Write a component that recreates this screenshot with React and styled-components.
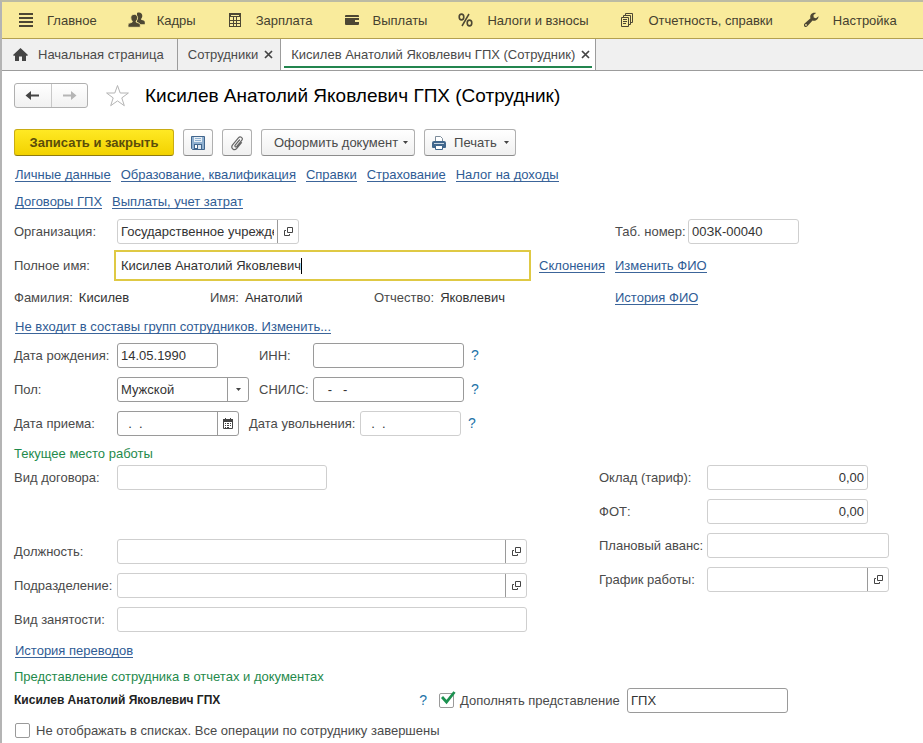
import React, { useState } from 'react';
import styled, { createGlobalStyle, css } from 'styled-components';

const GlobalStyle = createGlobalStyle`
  * {
    box-sizing: border-box;
  }
  body {
    margin: 0;
    background: #fff;
  }
  body, button, input, select {
    font-family: "Liberation Sans", Arial, sans-serif;
    font-size: 13px;
    line-height: 15px;
    color: #4a4a4a;
  }
  button {
    margin: 0;
    padding: 0;
    border: none;
    background: none;
    cursor: pointer;
  }
`;

const Window = styled.div`
  min-height: 100vh;
  border-top: 2px solid #bcbba4;
  border-left: 2px solid #b4b4b4;
`;

const Menu = styled.nav`
  display: flex;
  gap: 31px;
  height: 37px;
  padding-left: 16px;
  background: #f9eb9c;
  border-bottom: 1px solid #b3a050;
`;

const MenuItem = styled.button`
  display: flex;
  align-items: center;
  gap: 12px;
  white-space: nowrap;
  color: #45412f;
  svg {
    flex: none;
  }
`;

const Tabs = styled.div`
  display: flex;
  height: 32px;
  background: #f0f0f0;
  border-bottom: 1px solid #9c9c9c;
`;

const Tab = styled.div`
  display: flex;
  align-items: center;
  gap: 6px;
  padding: 0 7px 0 10px;
  white-space: nowrap;
  border-right: 1px solid #9c9c9c;
  ${({ $home }) => $home && css`
    padding: 0 13px 0 11px;
  `}
  ${({ $active }) => $active && css`
    padding-right: 5px;
    background: linear-gradient(#23854f, #23854f) center bottom 2px / calc(100% - 6px) 2px no-repeat #fff;
  `}
`;

const TabTitle = styled.button`
  display: flex;
  align-items: center;
  gap: 10px;
`;

const TabClose = styled.button`
  display: flex;
`;

const Page = styled.main`
  display: flex;
  flex-direction: column;
  padding: 12px 34px 4px 12px;
`;

const TitleRow = styled.div`
  display: flex;
  align-items: center;
  height: 25px;
`;

const History = styled.div`
  display: flex;
  width: 74px;
  height: 25px;
  border: 1px solid #b0b0b0;
  border-radius: 3px;
  background: linear-gradient(#fff, #f1f1f1);
`;

const HistoryButton = styled.button`
  display: flex;
  flex: 1;
  align-items: center;
  justify-content: center;
  & + & {
    border-left: 1px solid #c8c8c8;
  }
`;

const Favourite = styled.button`
  display: flex;
  margin: 0 15px 0 17px;
`;

const Title = styled.h1`
  margin: 0;
  font-size: 19px;
  line-height: 26px;
  font-weight: normal;
  color: #000;
`;

const Actions = styled.div`
  display: flex;
  gap: 9px;
  margin-top: 21px;
`;

const ActionButton = styled.button`
  display: flex;
  align-items: center;
  justify-content: center;
  gap: 7px;
  min-width: 30px;
  height: 27px;
  padding: 0 6px;
  border: 1px solid #b0b0b0;
  border-bottom-color: #8c8c8c;
  border-radius: 3px;
  background: linear-gradient(#fff, #f0f0f0);
  white-space: nowrap;
`;

const WideButton = styled(ActionButton)`
  gap: 5px;
  padding-left: 12px;
`;

const PrimaryButton = styled(ActionButton)`
  min-width: 160px;
  border-color: #c9ac13;
  border-bottom-color: #8f7b10;
  background: linear-gradient(#ffe924, #f2d200);
  color: #5b4d0a;
  font-weight: bold;
`;

const LinkBar = styled.div`
  display: flex;
  flex-wrap: wrap;
  gap: 10px;
  padding-left: 1px;
  margin-top: ${({ $top }) => $top}px;
`;

const Link = styled.a`
  display: inline-block;
  height: 15px;
  line-height: 16px;
  border-bottom: 1px solid #3c659a;
  color: #2f5c95;
  text-decoration: none;
  white-space: nowrap;
`;

const PersonGrid = styled.div`
  display: grid;
  grid-template-columns: minmax(0, 1fr) 84px 274px;
  align-items: center;
  margin-top: 10px;
`;

const NameGrid = styled(PersonGrid)`
  row-gap: 9px;
  margin: 6px 0 14px;
`;

const Row = styled.div`
  display: flex;
  align-items: center;
  min-height: 25px;
`;

const Label = styled.label`
  flex: none;
  width: ${({ $width }) => ($width ? `${$width}px` : 'auto')};
  white-space: nowrap;
`;

const Field = styled.span`
  display: flex;
  flex: ${({ $width }) => ($width ? 'none' : '1')};
  width: ${({ $width }) => ($width ? `${$width}px` : 'auto')};
  height: 25px;
  min-width: 0;
  border: 1px solid ${({ $soft }) => ($soft ? '#cfcfcf' : '#9a9a9a')};
  border-radius: 3px;
  background: #fff;
  overflow: hidden;
`;

const inputStyles = css`
  min-width: 0;
  padding: 0 3px;
  border: none;
  outline: none;
  background: none;
  color: #333;
`;

const Input = styled.input`
  ${inputStyles}
  flex: 1;
  width: 100%;
  text-align: ${({ $right }) => ($right ? 'right' : 'left')};
`;

const Select = styled.select`
  ${inputStyles}
  flex: 1;
  appearance: none;
`;

const FieldButton = styled.button`
  display: flex;
  flex: none;
  align-items: center;
  justify-content: center;
  width: 21px;
  border-left: 1px solid #9a9a9a;
`;

const FocusField = styled.span`
  display: flex;
  flex: 1;
  align-items: center;
  min-width: 0;
  height: 31px;
  padding-left: 2px;
  border: 2px solid #dfc944;
  background: #fff;
`;

// grows with its text, so that the caret bar stays at the end of it
const GrowingInput = styled.input`
  ${inputStyles}
  padding-right: 0;
  field-sizing: content;
  caret-color: transparent;
`;

const Caret = styled.span`
  width: 1px;
  height: 16px;
  background: #000;
`;

const NameParts = styled.div`
  display: grid;
  grid-template-columns: 196fr 164fr 157fr;
`;

const NamePart = styled.span`
  display: flex;
  gap: 6px;
  b {
    font-weight: normal;
    color: #333;
  }
`;

const Cell = styled.div`
  display: flex;
  padding-left: ${({ $left }) => $left || 0}px;
`;

const Rows = styled.div`
  display: flex;
  flex-direction: column;
  gap: 9px;
`;

const PersonalRows = styled(Rows)`
  margin-top: 9px;
`;

const Slot = styled.div`
  display: flex;
  flex: none;
  width: ${({ $width }) => $width}px;
`;

const Help = styled.button`
  margin-left: 7px;
  color: #2273a8;
  font-size: 14px;
`;

const SectionTitle = styled.h2`
  margin: ${({ $top }) => $top}px 0 4px;
  font-size: 13px;
  line-height: 15px;
  font-weight: normal;
  color: #1f8a4c;
`;

const Work = styled.div`
  display: grid;
  grid-template-columns: minmax(0, 1fr) 290px;
  column-gap: 72px;
`;

const Spacer = styled.div`
  height: 31px;
`;

const Presentation = styled(Row)`
  padding-right: 101px;
`;

const FullTitle = styled.strong`
  flex: 1;
  font-size: 12px;
  color: #222;
  white-space: nowrap;
`;

const ExtendGroup = styled.div`
  display: flex;
  align-items: center;
  gap: 6px;
  margin: 0 6px 0 12px;
`;

const CheckBox = styled.span`
  display: flex;
  position: relative;
  svg {
    position: absolute;
    left: 2px;
    top: -2px;
    pointer-events: none;
  }
`;

const CheckInput = styled.input`
  appearance: none;
  width: 15px;
  height: 15px;
  margin: 0;
  border: 1px solid #9a9a9a;
  border-radius: 2px;
  background: #fff;
`;

const CheckRow = styled.div`
  display: flex;
  align-items: center;
  gap: 6px;
  margin: 10px 0 0 1px;
`;

const ListIcon = () => (
  <svg width="17" height="16" viewBox="0 0 17 16" fill="#4d4733">
    <path d="M1 1h14v2H1zM1 5h14v2H1zM1 9h14v2H1zM1 13h14v2H1z" />
  </svg>
);

const PeopleIcon = () => (
  <svg width="17" height="16" viewBox="0 0 17 16" fill="#4d4733">
    <path d="M11 .5c2 0 3.3 1.3 3.3 3.2 0 1.3-.5 2.4-1.2 3v1l2.4.9c.9.4 1.3 1 1.3 1.9v1.7H9V.9c.6-.3 1.2-.4 2-.4z" />
    <path
      d="M6.200 2.300c2 0 3.400 1.500 3.400 3.500 0 1.400-.6 2.700-1.400 3.400v.9l2.500 1c1.100.4 1.600 1.100 1.600 2.200v2H0v-2c0-1.100.6-1.800 1.600-2.200l2.600-1v-.9C3.400 8.500 2.800 7.200 2.800 5.800c0-2 1.400-3.500 3.400-3.500z"
      stroke="#f9eb9c"
      strokeWidth=".9"
    />
  </svg>
);

const CalcIcon = () => (
  <svg width="17" height="16" viewBox="0 0 17 16">
    <rect x="2.5" y="1.5" width="11" height="13" fill="none" stroke="#4d4733" />
    <path d="M3 2h10v3H3z" fill="#4d4733" />
    <path d="M4 3h8v1H4z" fill="#f9eb9c" />
    <path d="M3 8.500h10M3 11.500h10M6.500 5v9M9.500 5v9" stroke="#4d4733" />
  </svg>
);

const WalletIcon = () => (
  <svg width="17" height="16" viewBox="0 0 17 16" fill="#4d4733">
    <path d="M2 3h12a1 1 0 0 1 1 1v1H1V4a1 1 0 0 1 1-1zM1 6h14v2h-4v2h4v2a1 1 0 0 1-1 1H2a1 1 0 0 1-1-1z" />
  </svg>
);

const PercentIcon = () => (
  <svg width="17" height="16" viewBox="0 0 17 16" fill="none" stroke="#4d4733">
    <ellipse cx="3.5" cy="5" rx="2.3" ry="2.9" strokeWidth="1.6" />
    <ellipse cx="11.5" cy="11" rx="2.3" ry="2.9" strokeWidth="1.6" />
    <path d="M11 2L4 14" strokeWidth="1.5" />
  </svg>
);

const ReportsIcon = () => (
  <svg width="17" height="16" viewBox="0 0 17 16" fill="none" stroke="#4d4733">
    <path d="M1.500 5.500h7v9h-7zM3.500 5V3.500h7v9H9M5.500 3V1.500h7v9H11" />
    <path d="M3 7.500h4M3 9.500h4M3 11.500h3" />
  </svg>
);

const WrenchIcon = () => (
  <svg width="17" height="16" viewBox="0 0 17 16">
    <path
      d="M14.600 4.200l-2.700 2-2.200-.8-.2-2.300L12.100.9C10.200.3 8 .8 6.900 2.400c-.8 1.200-.9 2.600-.4 3.800L.6 11.500c-.9.8-.9 2.100-.2 2.900.8.8 2.100.8 2.900-.1l5.300-5.900c1.500.5 3.300.2 4.500-1 1-.9 1.400-2.100 1.500-3.200z"
      fill="#4d4733"
    />
    <circle cx="2" cy="12.9" r=".9" fill="#f9eb9c" />
  </svg>
);

const HomeIcon = () => (
  <svg width="15" height="13" viewBox="0 0 15 13" fill="#444">
    <path d="M7.500 0L15 7l-1 1-1-.5V13H9V8.500H6V13H2V7.500L1 8 0 7z" />
  </svg>
);

const CloseIcon = () => (
  <svg width="9" height="9" viewBox="0 0 9 9">
    <path d="M1 1l7 7M8 1L1 8" stroke="#444" strokeWidth="1.7" />
  </svg>
);

const ArrowIcon = ({ forward }) => (
  <svg width="15" height="11" viewBox="0 0 15 11">
    <path
      d={forward ? 'M1 4.500h8V1l5.500 4.500L9 10V6.500H1z' : 'M14 4.500H6V1L.5 5.500 6 10V6.500h8z'}
      fill={forward ? '#b5b5b5' : '#444'}
    />
  </svg>
);

const StarIcon = () => (
  <svg width="25" height="23" viewBox="0 0 25 23">
    <path
      d="M12.500 1.500l2.700 7.500h8.200l-6.600 4.900 2.500 7.800-6.800-4.800-6.800 4.800 2.500-7.800L1.600 9h8.200z"
      fill="#fff"
      stroke="#b4b4b4"
    />
  </svg>
);

const SaveIcon = () => (
  <svg width="16" height="16" viewBox="0 0 16 16">
    <path d="M1.500 1.500h13v13h-12l-1-1z" fill="#8fb0d0" stroke="#41658c" />
    <path d="M4 2h8v5H4z" fill="#e6eef5" />
    <path d="M5 3.500h6M5 5.500h6" stroke="#8fb0d0" />
    <path d="M4 9h8v5H4z" fill="#41658c" />
    <path d="M5 10h2v3H5z" fill="#fff" />
    <path d="M8 10h3v4H8z" fill="#dfe8f0" />
  </svg>
);

const ClipIcon = () => (
  <svg width="14" height="16" viewBox="0 0 14 16" fill="none" stroke="#666" strokeWidth="1.2" strokeLinecap="round">
    <path d="M9.500 5L5.200 10.200c-.9 1.200.6 2.400 1.600 1.300l4.900-6c1.900-2.500-1.300-5-3.300-2.700L2.600 9.900c-2.400 3.200 1.600 6.400 4.200 3.400l4.700-5.600" />
  </svg>
);

const PrinterIcon = () => (
  <svg width="16" height="16" viewBox="0 0 16 16">
    <path d="M4.500 7V1.500h5l2 2V7" fill="#fff" stroke="#7d8c9a" />
    <path d="M1 8a2 2 0 0 1 2-2h10a2 2 0 0 1 2 2v4a1 1 0 0 1-1 1H2a1 1 0 0 1-1-1z" fill="#40668c" />
    <path d="M3 8h10v1H3z" fill="#c9d7e4" />
    <path d="M4.500 10.500h7v4h-7z" fill="#fff" stroke="#40668c" />
  </svg>
);

const DropIcon = () => (
  <svg width="5" height="3" viewBox="0 0 5 3">
    <path d="M0 0h5L2.500 3z" fill="#444" />
  </svg>
);

const OpenIcon = () => (
  <svg width="9" height="9" viewBox="0 0 9 9" fill="none" stroke="#444">
    <path d="M3.500.5h5v5h-5zM2 3.500H.5v5h5V7" />
  </svg>
);

const CalendarIcon = () => (
  <svg width="10" height="11" viewBox="0 0 10 11">
    <path d="M.5 2.500h9v8h-9z" fill="none" stroke="#444" />
    <path d="M0 1h2V0h1v1h4V0h1v1h2v3H0z" fill="#444" />
    <path d="M2 5h1v1H2zM4 5h2v1H4zM7 5h1v1H7zM2 7h1v1H2zM4 7h2v1H4zM7 7h1v1H7zM2 9h1v1H2zM4 9h2v1H4z" fill="#444" />
  </svg>
);

const TickIcon = () => (
  <svg width="15" height="14" viewBox="0 0 15 14">
    <path d="M1 6l4.500 5L13.500 1" fill="none" stroke="#1c9150" strokeWidth="2.8" />
  </svg>
);

const menu = [
  { title: 'Главное', Icon: ListIcon },
  { title: 'Кадры', Icon: PeopleIcon },
  { title: 'Зарплата', Icon: CalcIcon },
  { title: 'Выплаты', Icon: WalletIcon },
  { title: 'Налоги и взносы', Icon: PercentIcon },
  { title: 'Отчетность, справки', Icon: ReportsIcon },
  { title: 'Настройка', Icon: WrenchIcon },
];

const links = [
  ['Личные данные', 'Образование, квалификация', 'Справки', 'Страхование', 'Налог на доходы'],
  ['Договоры ГПХ', 'Выплаты, учет затрат'],
];

const TextField = ({ id, label, labelWidth, width, soft, right, value = '', open, calendar }) => (
  <>
    <Label htmlFor={id} $width={labelWidth}>{label}</Label>
    <Field $width={width} $soft={soft}>
      <Input id={id} defaultValue={value} $right={right} />
      {open && (
        <FieldButton type="button" aria-label="Открыть"><OpenIcon /></FieldButton>
      )}
      {calendar && (
        <FieldButton type="button" aria-label="Календарь"><CalendarIcon /></FieldButton>
      )}
    </Field>
  </>
);

const App = () => {
  const [fullName, setFullName] = useState('Кисилев Анатолий Яковлевич');
  const [extend, setExtend] = useState(true);

  return (
    <Window>
      <GlobalStyle />
      <Menu>
        {menu.map(({ title, Icon }) => (
          <MenuItem key={title} type="button">
            <Icon />
            {title}
          </MenuItem>
        ))}
      </Menu>
      <Tabs>
        <Tab $home>
          <TabTitle type="button"><HomeIcon />Начальная страница</TabTitle>
        </Tab>
        <Tab>
          <TabTitle type="button">Сотрудники</TabTitle>
          <TabClose type="button" aria-label="Закрыть"><CloseIcon /></TabClose>
        </Tab>
        <Tab $active>
          <TabTitle type="button">Кисилев Анатолий Яковлевич ГПХ (Сотрудник)</TabTitle>
          <TabClose type="button" aria-label="Закрыть"><CloseIcon /></TabClose>
        </Tab>
      </Tabs>

      <Page>
        <TitleRow>
          <History>
            <HistoryButton type="button" aria-label="Назад"><ArrowIcon /></HistoryButton>
            <HistoryButton type="button" aria-label="Вперед"><ArrowIcon forward /></HistoryButton>
          </History>
          <Favourite type="button" aria-label="В избранное"><StarIcon /></Favourite>
          <Title>Кисилев Анатолий Яковлевич ГПХ (Сотрудник)</Title>
        </TitleRow>

        <Actions>
          <PrimaryButton type="button">Записать и закрыть</PrimaryButton>
          <ActionButton type="button" aria-label="Записать"><SaveIcon /></ActionButton>
          <ActionButton type="button" aria-label="Файлы"><ClipIcon /></ActionButton>
          <WideButton type="button">Оформить документ<DropIcon /></WideButton>
          <ActionButton type="button"><PrinterIcon />Печать<DropIcon /></ActionButton>
        </Actions>

        {links.map((group, i) => (
          <LinkBar key={group[0]} $top={i === 0 ? 11 : 12}>
            {group.map(text => <Link key={text} href="#">{text}</Link>)}
          </LinkBar>
        ))}

        <PersonGrid>
          <Row>
            <TextField id="org" label="Организация:" labelWidth={103} width={182} soft open value="Государственное учреждение" />
          </Row>
          <span />
          <Row>
            <TextField id="number" label="Таб. номер:" labelWidth={73} width={111} soft value="00ЗК-00040" />
          </Row>
        </PersonGrid>
        <NameGrid>
          <Row>
            <Label htmlFor="fullName" $width={100}>Полное имя:</Label>
            <FocusField>
              <GrowingInput id="fullName" value={fullName} onChange={e => setFullName(e.target.value)} />
              <Caret />
            </FocusField>
          </Row>
          <Cell $left={8}><Link href="#">Склонения</Link></Cell>
          <Cell><Link href="#">Изменить ФИО</Link></Cell>
          <NameParts>
            <NamePart>Фамилия: <b>Кисилев</b></NamePart>
            <NamePart>Имя: <b>Анатолий</b></NamePart>
            <NamePart>Отчество: <b>Яковлевич</b></NamePart>
          </NameParts>
          <span />
          <Cell><Link href="#">История ФИО</Link></Cell>
        </NameGrid>

        <LinkBar $top={0}>
          <Link href="#">Не входит в составы групп сотрудников. Изменить...</Link>
        </LinkBar>

        <PersonalRows>
          <Row>
            <Label htmlFor="birth" $width={103}>Дата рождения:</Label>
            <Slot $width={142}>
              <Field $width={101}><Input id="birth" defaultValue="14.05.1990" /></Field>
            </Slot>
            <TextField id="inn" label="ИНН:" labelWidth={54} width={151} />
            <Help type="button">?</Help>
          </Row>
          <Row>
            <Label htmlFor="sex" $width={103}>Пол:</Label>
            <Slot $width={142}>
              <Field $width={132}>
                <Select id="sex" defaultValue="m">
                  <option value="m">Мужской</option>
                  <option value="f">Женский</option>
                </Select>
                <FieldButton as="span"><DropIcon /></FieldButton>
              </Field>
            </Slot>
            <TextField id="snils" label="СНИЛС:" labelWidth={54} width={151} value="   -   -" />
            <Help type="button">?</Help>
          </Row>
          <Row>
            <TextField id="hired" label="Дата приема:" labelWidth={103} width={122} calendar value="  .  ." />
            <Slot $width={10} />
            <TextField id="fired" label="Дата увольнения:" labelWidth={111} width={101} soft value="  .  ." />
            <Help type="button">?</Help>
          </Row>
        </PersonalRows>

        <SectionTitle $top={10}>Текущее место работы</SectionTitle>
        <Work>
          <Rows>
            <Row>
              <TextField id="contract" label="Вид договора:" labelWidth={103} width={210} soft />
            </Row>
            <Spacer />
            <Row>
              <TextField id="position" label="Должность:" labelWidth={103} soft open />
            </Row>
            <Row>
              <TextField id="department" label="Подразделение:" labelWidth={103} soft open />
            </Row>
            <Row>
              <TextField id="employment" label="Вид занятости:" labelWidth={103} soft />
            </Row>
          </Rows>
          <Rows>
            <Row>
              <TextField id="salary" label="Оклад (тариф):" labelWidth={108} width={161} soft right value="0,00" />
            </Row>
            <Row>
              <TextField id="fund" label="ФОТ:" labelWidth={108} width={161} soft right value="0,00" />
            </Row>
            <Row>
              <TextField id="advance" label="Плановый аванс:" labelWidth={108} soft />
            </Row>
            <Row>
              <TextField id="schedule" label="График работы:" labelWidth={108} soft open />
            </Row>
          </Rows>
        </Work>

        <LinkBar $top={11}>
          <Link href="#">История переводов</Link>
        </LinkBar>

        <SectionTitle $top={11}>Представление сотрудника в отчетах и документах</SectionTitle>
        <Presentation>
          <FullTitle>Кисилев Анатолий Яковлевич ГПХ</FullTitle>
          <Help type="button">?</Help>
          <ExtendGroup>
            <CheckBox>
              <CheckInput id="extend" type="checkbox" checked={extend} onChange={e => setExtend(e.target.checked)} />
              {extend && <TickIcon />}
            </CheckBox>
            <Label htmlFor="extend" $width={161}>Дополнять представление</Label>
          </ExtendGroup>
          <Field $width={161}>
            <Input aria-label="Дополнение представления" defaultValue="ГПХ" />
          </Field>
        </Presentation>
        <CheckRow>
          <CheckInput id="hidden" type="checkbox" />
          <Label htmlFor="hidden">Не отображать в списках. Все операции по сотруднику завершены</Label>
        </CheckRow>
      </Page>
    </Window>
  );
};

export default App;
